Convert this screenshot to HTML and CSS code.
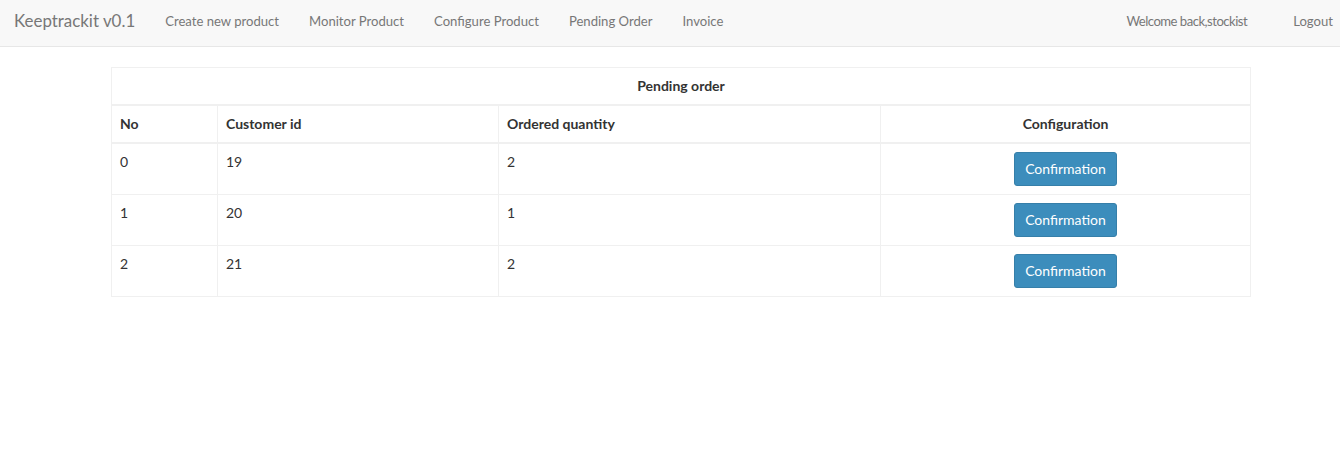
FILE: index.html
```html
<!DOCTYPE html>
<html>
<head>
<meta charset="utf-8">
<link rel="stylesheet" href="styles.css">
</head>
<body>
<nav class="navbar">
  <div class="nav-left">
    <a class="brand" href="#">Keeptrackit v0.1</a>
    <ul class="nav">
      <li><a href="#">Create new product</a></li>
      <li><a href="#">Monitor Product</a></li>
      <li><a href="#">Configure Product</a></li>
      <li><a href="#">Pending Order</a></li>
      <li><a href="#">Invoice</a></li>
    </ul>
  </div>
  <ul class="nav nav-right">
    <li><a class="welcome" href="#">Welcome back,stockist</a></li>
    <li><a class="logout" href="#">Logout</a></li>
  </ul>
</nav>
<main class="container">
  <table class="orders">
    <thead>
      <tr><th colspan="4" class="caption">Pending order</th></tr>
      <tr>
        <th class="c1">No</th>
        <th class="c2">Customer id</th>
        <th class="c3">Ordered quantity</th>
        <th class="c4 center">Configuration</th>
      </tr>
    </thead>
    <tbody>
      <tr><td>0</td><td>19</td><td>2</td><td class="center"><button class="btn">Confirmation</button></td></tr>
      <tr><td>1</td><td>20</td><td>1</td><td class="center"><button class="btn">Confirmation</button></td></tr>
      <tr><td>2</td><td>21</td><td>2</td><td class="center"><button class="btn">Confirmation</button></td></tr>
    </tbody>
  </table>
</main>
</body>
</html>
```
FILE: styles.css
```css
* { box-sizing: border-box; }
html, body { margin: 0; padding: 0; }
body {
  font-family: Lato, "Open Sans", sans-serif;
  font-size: 14px;
  line-height: 20px;
  color: #333;
  background: #fff;
}
a { text-decoration: none; }
.navbar {
  height: 47px;
  background: #f8f8f8;
  border-bottom: 1px solid #e7e7e7;
  display: flex;
  justify-content: space-between;
  align-items: flex-start;
  padding: 0 7px 0 0;
}
.nav-left { display: flex; align-items: flex-start; }
.brand {
  color: #777;
  font-size: 16.9px;
  line-height: 22px;
  padding: 10px 15px 0 14px;
}
.nav {
  list-style: none;
  margin: 0;
  padding: 0;
  display: flex;
}
.nav li a {
  display: block;
  font-size: 13.1px;
  line-height: 20px;
  padding: 11px 15px 0;
  color: #777;
}
.nav-right { padding: 0; }
.nav-right .welcome { padding-right: 46px; letter-spacing: -0.5px; }
.nav-right .logout { padding: 11px 0 0 0; }
.container {
  margin: 20px 0 0 111px;
  width: 1140px;
}
.orders {
  width: 1140px;
  border-collapse: collapse;
  border: 1px solid #f0f0f0;
}
.orders th, .orders td {
  border: 1px solid #f0f0f0;
  padding: 8px;
  text-align: left;
  vertical-align: top;
}
.orders th {
  font-weight: bold;
  border-bottom-width: 2px;
}
.orders th.caption {
  text-align: center;
  padding: 8px;
  height: 37px;
}
.orders .c1 { width: 106px; }
.orders .c2 { width: 281px; }
.orders .c3 { width: 382px; }
.orders .center { text-align: center; }
.btn {
  font-family: inherit;
  font-size: 14px;
  line-height: 20px;
  color: #fff;
  background: #3c8dbc;
  border: 1px solid #367fa9;
  border-radius: 3px;
  padding: 6px 10px;
  width: 103px;
  height: 34px;
  cursor: pointer;
}
```
